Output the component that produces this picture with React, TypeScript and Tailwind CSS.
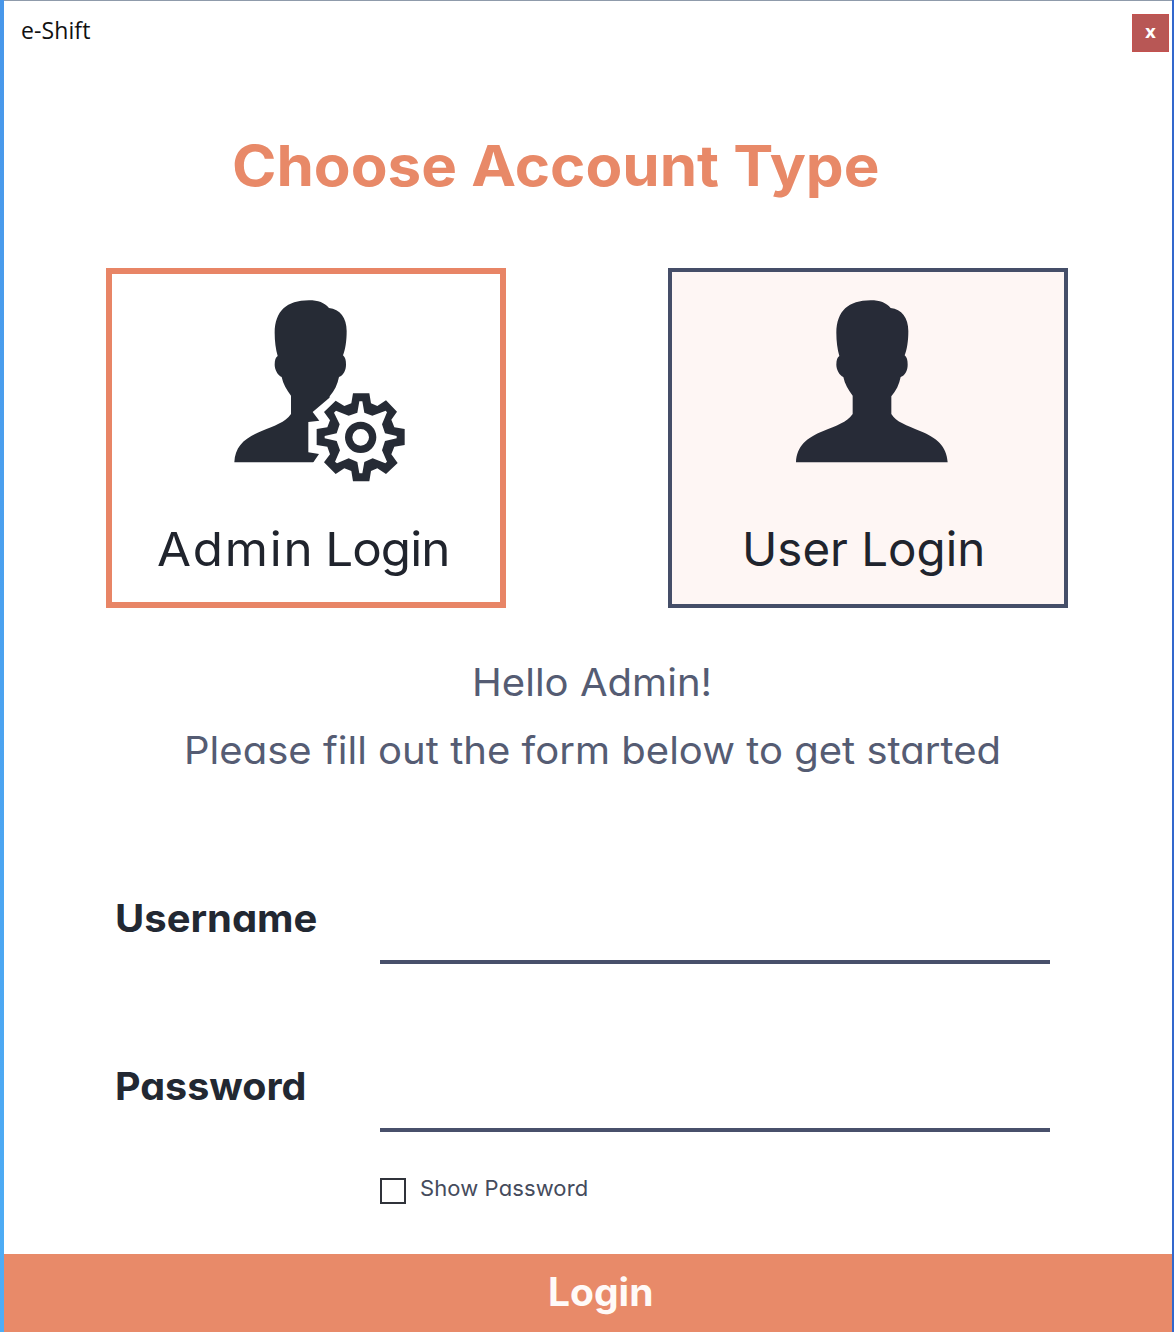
import { useState } from "react";

const BODY =
  "M48 529C50 480 80 455 130 435C170 418 200 410 218 384L218 329C205 312 194 294 190 273C178 268 169 250 169 236C169 222 172 214 178 210C172 190 169 165 169 140C170 75 205 43 272 43C300 43 318 50 332 66C365 70 385 95 385 135C385 165 381 190 374 208C381 214 383 222 383 236C383 252 376 268 362 273C358 295 348 315 334 331L334 384C348 408 380 418 420 435C470 455 500 480 503 529Z";

const GEAR =
  "M399 322L448 322L453 352L472 360L498 343L531 377L514 401L523 424L554 429L554 477L523 482L514 505L533 531L498 564L472 547L453 555L448 586L399 586L394 555L373 547L347 564L312 529L330 505L322 482L290 477L290 429L322 424L330 403L312 378L347 344L373 360L394 352Z";

const GEAR_INSIDE =
  "M418 346L427 346L433 380L457 389L497 374L501 379L486 415L495 442L530 450L530 457L495 465L486 493L501 527L496 532L458 517L433 528L427 562L418 562L412 528L386 517L351 532L345 527L360 493L350 465L314 457L314 450L350 442L359 415L342 380L348 374L386 389L412 380Z";

const CUTOUT =
  "M370 300L278 378L298 404L265 408L265 499L297 504L276 535L300 600L600 600L600 300Z";

function UserIcon() {
  return (
    <svg viewBox="0 0 570 600" className="h-[200px] w-[190px]" aria-hidden="true">
      <path d={BODY} fill="#272b37" />
    </svg>
  );
}

function AdminIcon() {
  return (
    <svg viewBox="0 0 600 630" className="h-[210px] w-[200px]" aria-hidden="true">
      <path d={BODY} fill="#262b35" transform="translate(-5 0)" />
      <path d={CUTOUT} fill="#fff" />
      <path d={GEAR} fill="#262b35" />
      <path d={GEAR_INSIDE} fill="#fff" />
      <circle cx="422" cy="454" r="36" fill="none" stroke="#262b35" strokeWidth="22" />
    </svg>
  );
}

export default function App() {
  const [show, setShow] = useState(false);
  return (
    <div className="flex h-[1332px] w-[1174px] bg-gradient-to-b from-[#4897ea] to-[#4eadf5] pl-1 font-['Inter',sans-serif] whitespace-nowrap [font-feature-settings:'cv11']">
      <main className="flex w-[1168px] flex-col border-t border-[#8f9bab] bg-white">
        <header className="flex h-[51px] justify-between pr-[3px] pl-[17px]">
          <span className="font-['Open_Sans',sans-serif] text-[23px] leading-[58px] tracking-[0.1px] text-[#111]">e-Shift</span>
          <button className="mt-[13px] flex h-[38px] w-[37px] items-center justify-center border border-[#c4514e] bg-[#b85755] font-['DejaVu_Sans',sans-serif] text-[17px] font-bold text-white">
            x
          </button>
        </header>

        <h1 className="mt-[74px] pl-[228px] text-[56px] leading-[80px] font-bold text-[#e88968]">
          <span className="inline-block origin-left scale-x-[1.073]">Choose Account Type</span>
        </h1>

        <section className="mt-[62px] flex gap-[162px] pl-[102px]">
          <button className="flex h-[340px] w-[400px] flex-col items-start border-[6px] border-[#e88566] pt-[12px] pl-[108px] text-left">
            <AdminIcon />
            <span className="mt-[23px] -ml-[63px] origin-left scale-x-[1.05] text-[47px] leading-[60px] font-normal text-[#20242d] [word-spacing:-3px]">
              <span className="tracking-[1.7px]">Admin</span> <span className="tracking-[-0.9px]">Login</span>
            </span>
          </button>
          <button className="flex h-[340px] w-[400px] flex-col items-start border-4 border-[#454e68] bg-[#fef6f4] pt-[14px] pl-[108px] text-left">
            <UserIcon />
            <span className="mt-[33px] -ml-[38px] origin-left scale-x-[1.01] text-[47px] leading-[60px] font-normal text-[#20242d]">User Login</span>
          </button>
        </section>

        <p className="mt-[44px] pl-[468px] text-[38px] leading-[60px] text-[#555c73]">
          <span className="inline-block origin-left scale-x-[1.055]">Hello Admin!</span>
        </p>
        <p className="mt-2 pl-[180px] text-[38px] leading-[60px] text-[#555c73]">
          <span className="inline-block origin-left scale-x-[1.054]">Please fill out the form below to get started</span>
        </p>

        <form className="flex flex-1 flex-col" onSubmit={(e) => e.preventDefault()}>
          <label className="mt-[108px] flex h-[76px] pl-[111px]">
            <span className="w-[265px] text-[38px] leading-[61px] font-bold text-[#222832]">
              <span className="inline-block origin-left scale-x-[1.052]">Username</span>
            </span>
            <input className="w-[670px] border-b-4 border-[#48506b] text-3xl outline-none" />
          </label>
          <label className="mt-[92px] flex h-[76px] pl-[111px]">
            <span className="w-[265px] text-[38px] leading-[61px] font-bold text-[#222832]">
              <span className="inline-block origin-left scale-x-[1.038]">Password</span>
            </span>
            <input type={show ? "text" : "password"} className="w-[670px] border-b-4 border-[#48506b] text-3xl outline-none" />
          </label>
          <label className="mt-[41px] flex h-[40px] items-start pl-[376px]">
            <input type="checkbox" checked={show} onChange={() => setShow(!show)} className="mt-[5px] size-[26px] appearance-none border-2 border-[#30333a] bg-white checked:bg-[#454e68]" />
            <span className="ml-[14px] text-[22px] leading-[30px] tracking-[0.1px] text-[#454b5c]">Show Password</span>
          </label>
          <button className="mt-auto h-[78px] bg-[#e88a69] pb-[2px] pl-[544px] text-left text-[39px] leading-[76px] font-bold text-[#fffaf8]">Login</button>
        </form>
      </main>
      <div className="w-0.5 bg-[#3268cd]" />
    </div>
  );
}
